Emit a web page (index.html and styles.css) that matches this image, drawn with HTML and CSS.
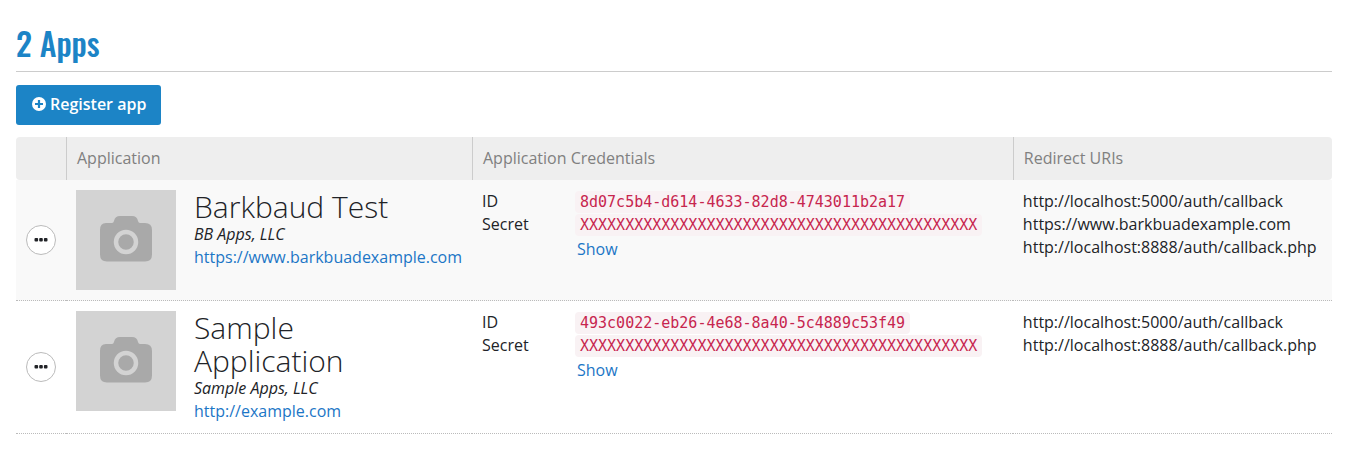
FILE: index.html
```html
<!DOCTYPE html>
<html lang="en">
<head>
<meta charset="utf-8">
<title>My Apps</title>
<link rel="stylesheet" href="styles.css">
</head>
<body>
<svg class="defs" aria-hidden="true">
  <symbol id="camera" viewBox="0 0 100 100">
    <rect width="100" height="100" fill="#d3d3d3"/>
    <path fill="#a9a9a9" d="M30 33h6q1.500 0 2-2 1-5 6-5h12q5 0 6 5 .5 2 2 2h5q7 0 7 7v24.500q0 7-7 7H31q-7 0-7-7V40q0-7 6-7z"/>
    <circle cx="50" cy="52" r="10" fill="#a9a9a9" stroke="#d3d3d3" stroke-width="4.500"/>
  </symbol>
  <symbol id="dots" viewBox="0 0 14 4">
    <rect x="0.500" width="3.600" height="3.600" rx="1"/>
    <rect x="5.200" width="3.600" height="3.600" rx="1"/>
    <rect x="9.900" width="3.600" height="3.600" rx="1"/>
  </symbol>
</svg>
<main class="page">
  <h1 class="page-title">2 Apps</h1>
  <button class="register" type="button">
    <svg class="register-icon" viewBox="0 0 14 14" aria-hidden="true"><circle cx="7" cy="7" r="7" fill="#fff"/><path d="M7 3v8M3 7h8" stroke="#1c84c6" stroke-width="2.200"/></svg>
    Register app
  </button>
  <table class="apps">
    <colgroup><col class="col-menu"><col class="col-app"><col class="col-cred"><col></colgroup>
    <thead>
      <tr><th></th><th scope="col">Application</th><th scope="col">Application Credentials</th><th scope="col">Redirect URIs</th></tr>
    </thead>
    <tbody>
      <tr>
        <td class="menu-cell"><button class="menu" type="button" aria-label="Actions for Barkbaud Test"><svg class="menu-icon"><use href="#dots"/></svg></button></td>
        <td>
          <div class="app">
            <svg class="thumb"><use href="#camera"/></svg>
            <div>
              <h2 class="app-name">Barkbaud Test</h2>
              <em class="vendor">BB Apps, LLC</em>
              <a class="link" href="#barkbaud">https://www.barkbuadexample.com</a>
            </div>
          </div>
        </td>
        <td>
          <dl class="creds">
            <dt>ID</dt><dd><code class="code">8d07c5b4-d614-4633-82d8-4743011b2a17</code></dd>
            <dt>Secret</dt><dd><code class="code">XXXXXXXXXXXXXXXXXXXXXXXXXXXXXXXXXXXXXXXXXXXX</code></dd>
            <dd class="reveal"><a class="link" href="#show-1">Show</a></dd>
          </dl>
        </td>
        <td>
          <div>http://localhost:5000/auth/callback</div>
          <div>https://www.barkbuadexample.com</div>
          <div>http://localhost:8888/auth/callback.php</div>
        </td>
      </tr>
      <tr>
        <td class="menu-cell"><button class="menu" type="button" aria-label="Actions for Sample Application"><svg class="menu-icon"><use href="#dots"/></svg></button></td>
        <td>
          <div class="app">
            <svg class="thumb"><use href="#camera"/></svg>
            <div>
              <h2 class="app-name">Sample Application</h2>
              <em class="vendor">Sample Apps, LLC</em>
              <a class="link" href="#sample">http://example.com</a>
            </div>
          </div>
        </td>
        <td>
          <dl class="creds">
            <dt>ID</dt><dd><code class="code">493c0022-eb26-4e68-8a40-5c4889c53f49</code></dd>
            <dt>Secret</dt><dd><code class="code">XXXXXXXXXXXXXXXXXXXXXXXXXXXXXXXXXXXXXXXXXXXX</code></dd>
            <dd class="reveal"><a class="link" href="#show-2">Show</a></dd>
          </dl>
        </td>
        <td>
          <div>http://localhost:5000/auth/callback</div>
          <div>http://localhost:8888/auth/callback.php</div>
        </td>
      </tr>
    </tbody>
  </table>
</main>
</body>
</html>
```
FILE: styles.css
```css
* { box-sizing: border-box; }
body {
  margin: 0;
  background: #fff;
  color: #212327;
  font: 16px/23px "Open Sans", "Noto Sans", sans-serif;
}
.defs { display: none; }
.page { padding: 20px 19px 20px 16px; }
.page-title {
  margin: 0 0 13px;
  padding-bottom: 5px;
  border-bottom: 1px solid #ccc;
  color: #1c84c6;
  font: 500 32px/46px Oswald, "Liberation Sans Narrow", "Liberation Sans", sans-serif;
}
.register {
  display: flex;
  align-items: center;
  gap: 4px;
  height: 40px;
  margin: 0 0 12px;
  padding: 0 15px 2px 16px;
  border: 0;
  border-radius: 3px;
  background: #1c84c6;
  color: #fff;
  font: 600 16px/23px "Open Sans", "Noto Sans", sans-serif;
}
.register-icon { width: 14px; height: 14px; }
.apps {
  width: 100%;
  border-spacing: 0;
  table-layout: fixed;
}
.col-menu { width: 50px; }
.col-app { width: 30.85%; }
.col-cred { width: 41.1%; }
th {
  padding: 10px;
  background: #eee;
  color: #808080;
  font-weight: 400;
  text-align: left;
}
th + th { border-left: 1px solid #ccc; }
th:first-child { border-radius: 4px 0 0 4px; }
th:last-child { border-radius: 0 4px 4px 0; }
td {
  padding: 10px;
  border-bottom: 1px dotted #bbb;
  vertical-align: top;
}
tbody tr:nth-child(odd) { background: #f9f9f9; }
.menu-cell { vertical-align: middle; }
.menu {
  display: flex;
  align-items: center;
  justify-content: center;
  width: 30px;
  height: 30px;
  padding: 0;
  border: 1px solid #bbb;
  border-radius: 50%;
  background: #fff;
}
.menu-icon { width: 14px; height: 4px; fill: #212327; }
.app { display: flex; gap: 18px; }
.thumb { flex: none; width: 100px; height: 100px; }
.app-name {
  max-width: 240px;
  margin: 0;
  font-size: 30px;
  font-weight: 300;
  line-height: 33px;
}
.vendor { display: block; }
.link { display: block; color: #1c76c6; text-decoration: none; }
.creds {
  display: grid;
  grid-template-columns: 93px 1fr;
  margin: 0;
}
.creds dd { margin: 0; }
.reveal { grid-column: 2; padding: 2px; }
.code {
  padding: 2px 5px;
  border-radius: 4px;
  background: #f9f2f4;
  color: #c7254e;
  font: 15px/18px Menlo, "DejaVu Sans Mono", monospace;
}
```
